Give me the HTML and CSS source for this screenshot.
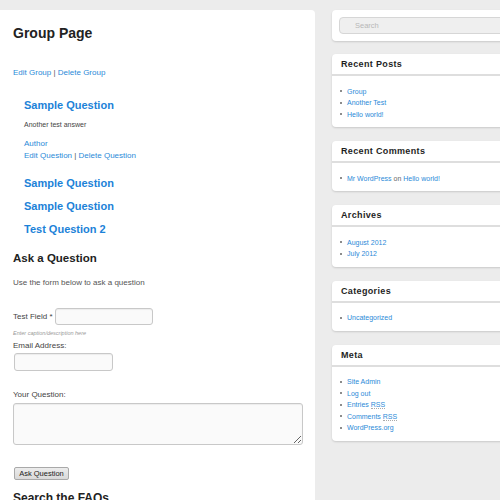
FILE: index.html
```html
<!DOCTYPE html>
<html lang="en">
<head>
<meta charset="utf-8">
<title>Group Page</title>
<link rel="stylesheet" href="styles.css">
</head>
<body>
<div class="page">
  <main class="content">
    <h1 class="page-title">Group Page</h1>
    <p class="group-links"><a href="#">Edit Group</a> | <a href="#">Delete Group</a></p>

    <div class="questions">
      <div class="question full">
        <h3 class="question-title"><a href="#">Sample Question</a></h3>
        <p class="answer">Another test answer</p>
        <p class="q-meta"><a href="#">Author</a><br><a href="#">Edit Question</a> | <a href="#">Delete Question</a></p>
      </div>
      <div class="question"><h3 class="question-title"><a href="#">Sample Question</a></h3></div>
      <div class="question"><h3 class="question-title"><a href="#">Sample Question</a></h3></div>
      <div class="question"><h3 class="question-title"><a href="#">Test Question 2</a></h3></div>
    </div>

    <h2 class="section-title">Ask a Question</h2>
    <p class="intro">Use the form below to ask a question</p>

    <form class="ask-form">
      <div class="field-row">
        <label class="label" for="tf">Test Field *</label>
        <input class="input input-test" id="tf" type="text">
      </div>
      <p class="caption">Enter caption/description here</p>
      <label class="label block" for="em">Email Address:</label>
      <input class="input input-email" id="em" type="text">
      <label class="label block question-label" for="yq">Your Question:</label>
      <textarea class="input textarea" id="yq"></textarea>
      <button class="ask-btn" type="button">Ask Question</button>
    </form>

    <h2 class="section-title search-title">Search the FAQs</h2>
  </main>

  <aside class="sidebar">
    <div class="widget search-widget">
      <input class="search-input" type="text" placeholder="Search">
    </div>

    <div class="widget">
      <h4 class="widget-title">Recent Posts</h4>
      <ul class="widget-list">
        <li><a href="#">Group</a></li>
        <li><a href="#">Another Test</a></li>
        <li><a href="#">Hello world!</a></li>
      </ul>
    </div>

    <div class="widget">
      <h4 class="widget-title">Recent Comments</h4>
      <ul class="widget-list">
        <li><a href="#">Mr WordPress</a> on <a href="#">Hello world!</a></li>
      </ul>
    </div>

    <div class="widget">
      <h4 class="widget-title">Archives</h4>
      <ul class="widget-list">
        <li><a href="#">August 2012</a></li>
        <li><a href="#">July 2012</a></li>
      </ul>
    </div>

    <div class="widget">
      <h4 class="widget-title">Categories</h4>
      <ul class="widget-list">
        <li><a href="#">Uncategorized</a></li>
      </ul>
    </div>

    <div class="widget">
      <h4 class="widget-title">Meta</h4>
      <ul class="widget-list">
        <li><a href="#">Site Admin</a></li>
        <li><a href="#">Log out</a></li>
        <li><a href="#">Entries <abbr class="rss" title="Really Simple Syndication">RSS</abbr></a></li>
        <li><a href="#">Comments <abbr class="rss" title="Really Simple Syndication">RSS</abbr></a></li>
        <li><a href="#">WordPress.org</a></li>
      </ul>
    </div>
  </aside>
</div>
</body>
</html>
```

FILE: styles.css
```css
html, body {
  margin: 0;
  padding: 0;
  background: #ececec;
  overflow: hidden;
}

body {
  font-family: "Liberation Sans", Arial, sans-serif;
  color: #555;
}

a {
  color: #2b8ad8;
  text-decoration: none;
}

p, h1, h2, h3, h4, ul {
  margin: 0;
}

.page {
  display: flex;
  align-items: flex-start;
  gap: 17px;
  width: 520px;
}

/* ---------- main content ---------- */
.content {
  flex: 0 0 auto;
  width: 302px;
  min-height: 520px;
  margin-top: 10px;
  padding: 15px 0 0 13px;
  background: #fff;
  border-radius: 0 4px 0 0;
}

.page-title {
  font-size: 14px;
  line-height: 16px;
  font-weight: bold;
  color: #222;
}

.group-links {
  margin-top: 27px;
  font-size: 8px;
  line-height: 10px;
}

.questions {
  margin-left: 11px;
  margin-top: 20px;
}

.question + .question {
  margin-top: 9px;
}

.question.full {
  margin-bottom: 14px;
}

.question-title {
  font-size: 11px;
  line-height: 14px;
  font-weight: bold;
}

.question-title a {
  color: #1c82d8;
}

.answer {
  margin-top: 8px;
  font-size: 7px;
  line-height: 10px;
  color: #444;
}

.q-meta {
  margin-top: 8px;
  font-size: 8px;
  line-height: 12px;
}

.section-title {
  margin-top: 15px;
  font-size: 11.5px;
  line-height: 14px;
  font-weight: bold;
  color: #222;
}

.intro {
  margin-top: 13px;
  font-size: 8px;
  line-height: 10px;
  color: #555;
}

/* ---------- form ---------- */
.ask-form {
  margin: 0;
}

.field-row {
  display: flex;
  align-items: center;
  margin-top: 20px;
}

.label {
  font-size: 8px;
  line-height: 10px;
  color: #444;
}

.label.block {
  display: block;
}

.input {
  box-sizing: border-box;
  border: 1px solid #c8c8c8;
  border-radius: 3px;
  background: #fafafa;
  box-shadow: inset 0 1px 1px rgba(0, 0, 0, 0.06);
  font-family: "Liberation Sans", Arial, sans-serif;
  font-size: 8px;
  padding: 2px;
  margin: 0;
}

.input-test {
  width: 98px;
  height: 17px;
  margin-left: 2px;
}

.caption {
  margin-top: 4px;
  font-size: 5.5px;
  line-height: 8px;
  font-style: italic;
  color: #999;
}

.caption + .label {
  margin-top: 4px;
}

.input-email {
  display: block;
  width: 99px;
  height: 18px;
  margin: 2px 0 0 1px;
}

.question-label {
  margin-top: 19px;
}

.textarea {
  display: block;
  width: 290px;
  height: 42px;
  margin-top: 3px;
}

.ask-btn {
  display: block;
  box-sizing: border-box;
  width: 55px;
  height: 13px;
  margin: 22px 0 0 1px;
  padding: 0;
  border: 1px solid #a9a9a9;
  border-radius: 2px;
  background: linear-gradient(#ececec, #d9d9d9);
  font-family: "Liberation Sans", Arial, sans-serif;
  font-size: 7.5px;
  line-height: 11px;
  color: #222;
}

.search-title {
  margin-top: 11px;
  font-size: 12px;
}

/* ---------- sidebar ---------- */
.sidebar {
  flex: 0 0 auto;
  width: 190px;
  margin-top: 10px;
  display: flex;
  flex-direction: column;
  gap: 14px;
}

.widget {
  background: #fff;
  border-radius: 4px;
  box-shadow: 0 1px 2px rgba(0, 0, 0, 0.15);
}

.search-widget {
  padding: 7px 0 7px 7px;
}

.search-widget + .widget {
  margin-top: -1px;
}

.search-input {
  display: block;
  box-sizing: border-box;
  width: 100%;
  height: 17px;
  border: 1px solid #d6d6d6;
  border-radius: 4px;
  background: #efefef;
  padding: 0 0 0 15px;
  font-family: "Liberation Sans", Arial, sans-serif;
  font-size: 7.5px;
  color: #555;
}

.search-input::placeholder {
  color: #b8b8b8;
}

.widget-title {
  height: 20px;
  line-height: 20px;
  padding-left: 9px;
  border-bottom: 2px solid #dedede;
  font-size: 9px;
  font-weight: bold;
  letter-spacing: 0.35px;
  color: #1e1e1e;
}

.widget-list {
  list-style: none;
  padding: 9.5px 0 7px 8px;
  font-size: 7px;
  line-height: 11.5px;
  color: #666;
}

.widget-list li::before {
  content: "";
  display: inline-block;
  width: 2px;
  height: 2px;
  margin-right: 5px;
  vertical-align: 1.5px;
  border-radius: 1px;
  background: #666;
}

.rss {
  text-decoration: none;
  border-bottom: 1px dotted #aaa;
}
```
